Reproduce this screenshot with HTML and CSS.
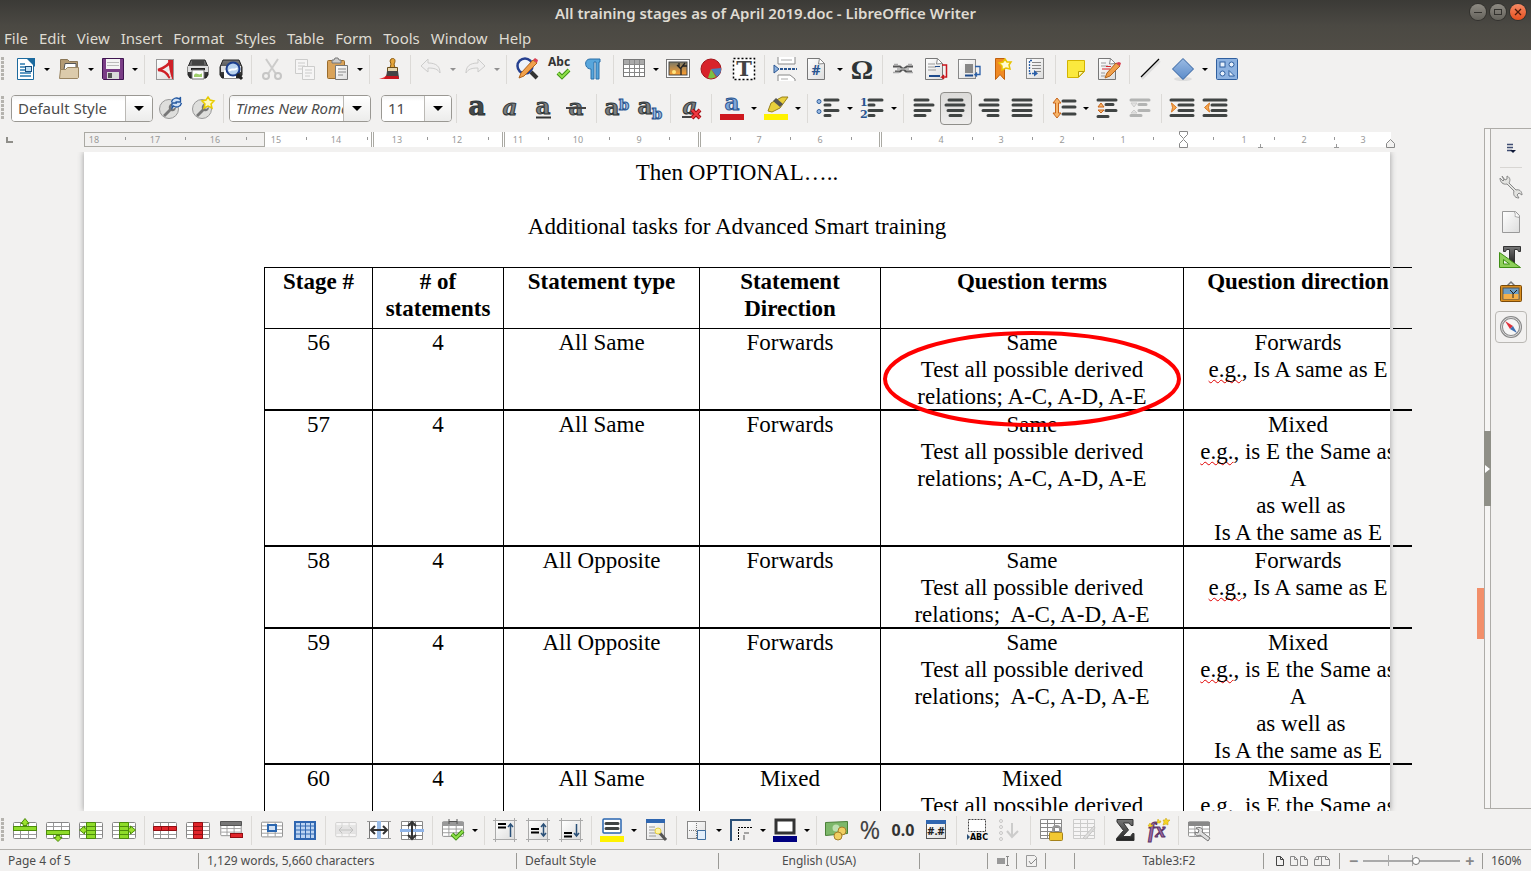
FILE: index.html
```html
<!DOCTYPE html>
<html lang="en">
<head>
<meta charset="utf-8">
<title>All training stages as of April 2019.doc - LibreOffice Writer</title>
<link rel="stylesheet" href="styles.css">
</head>
<body>
<svg class="defs" width="0" height="0" aria-hidden="true">
  <defs>
    <linearGradient id="dark" x1="0" y1="0" x2="0" y2="1"><stop offset="0" stop-color="#777"/><stop offset="1" stop-color="#222"/></linearGradient>
    <linearGradient id="paper" x1="0" y1="0" x2="1" y2="1"><stop offset="0" stop-color="#fff"/><stop offset="1" stop-color="#ddd"/></linearGradient>
    <linearGradient id="blue" x1="0" y1="0" x2="0" y2="1"><stop offset="0" stop-color="#9bbbe3"/><stop offset="1" stop-color="#5b8bc9"/></linearGradient>
    <linearGradient id="sky" x1="0" y1="0" x2="0" y2="1"><stop offset="0" stop-color="#7b7a68"/><stop offset="1" stop-color="#ff9f2e"/></linearGradient>
    <symbol id="grid" viewBox="0 0 24 18"><rect x=".5" y=".5" width="23" height="16" rx="1" fill="#fff" stroke="#888"/><path d="M1 4.500h22M1 8.500h22M1 12.500h22M7.500 1v15M15.500 1v15" stroke="#999" fill="none"/></symbol>
    <symbol id="sheet" viewBox="0 0 24 24"><path d="M3.500 1.500h12l5 5v16h-17z" fill="url(#paper)" stroke="#777"/><path d="M15.500 1.500l-1 5.500 6-.5z" fill="#fff" stroke="#888"/></symbol>
    <symbol id="cell" viewBox="0 0 24 24"><rect x="3" y="3" width="18" height="18" fill="url(#paper)"/><path d="M0 2.500h24M0 21.500h24M2.500 0v24M21.500 0v24" stroke="#aaa"/></symbol>
  </defs>
</svg>

<header class="titlebar">
  <h1 class="title">All training stages as of April 2019.doc - LibreOffice Writer</h1>
  <div class="winbtns">
    <button class="win" aria-label="Minimize"><svg width="16" height="16"><path d="M4 8.500h8" stroke="#33322e"/></svg></button>
    <button class="win" aria-label="Maximize"><svg width="16" height="16"><rect x="4.500" y="5.500" width="7" height="5" fill="none" stroke="#33322e"/></svg></button>
    <button class="win win-close" aria-label="Close"><svg width="16" height="16"><path d="M5 5l6 6M11 5l-6 6" stroke="#4a1a0a" stroke-width="1.300"/></svg></button>
  </div>
</header>
<nav class="menubar">
  <button>File</button><button>Edit</button><button>View</button><button>Insert</button><button>Format</button><button>Styles</button><button>Table</button><button>Form</button><button>Tools</button><button>Window</button><button>Help</button>
</nav>

<div class="toolbar standard" role="toolbar" aria-label="Standard">
  <i class="grip"></i>
  <button class="tb" aria-label="New"><svg viewBox="0 0 24 24"><path d="M4.500 1.500h10l6 6v15h-16z" fill="#fff" stroke="#1c6a9e"/><path d="M13 1h9v9z" fill="#1c6a9e"/><path d="M7 7h5M7 10h5M7 13h5M7 16h11M7 19h11" stroke="#2a7ab0" stroke-width="1.500"/><rect x="12.500" y="9.500" width="6" height="5" fill="#bfe0f5" stroke="#174f80"/></svg></button><button class="drop" aria-label="New options"></button>
  <button class="tb" aria-label="Open"><svg viewBox="0 0 24 24"><path d="M3.500 20.500V2.500h7l2 2h8v8" fill="#b49b74" stroke="#8a7656"/><path d="M8 6.500h11v6H7z" fill="#fff" stroke="#555"/><path d="M2.500 21.500l1-9h5l2-2h11v10l-1 1z" fill="#dccbab" stroke="#9a8561"/></svg></button><button class="drop" aria-label="Open options"></button>
  <button class="tb" aria-label="Save"><svg viewBox="0 0 24 24"><path d="M1.500 1.500h21v21h-20l-1-1z" fill="#7a3d86" stroke="#3f1550"/><rect x="5" y="2" width="14" height="10" fill="#f4f4f4"/><path d="M6 5.500h12M6 8.500h12" stroke="#bbb"/><rect x="6" y="15" width="12" height="7" fill="#d9d9d9"/><rect x="7" y="16" width="4" height="5" fill="#555"/></svg></button><button class="drop" aria-label="Save options"></button>
  <i class="sep"></i>
  <button class="tb" aria-label="Export as PDF"><svg viewBox="0 0 24 24"><rect x="3.500" y="2.500" width="17" height="20" fill="url(#paper)" stroke="#999"/><path d="M18 3c-1 4-7 8-13 10 5 0 9 3 12 8" stroke="#cf2027" stroke-width="2.500" fill="none"/><path d="M15 3h5v19h-1c-2-6-3-12-4-19z" fill="#cf2027"/><path d="M15 14c1 3 2 5 3 7" stroke="#fff"/></svg></button>
  <button class="tb" aria-label="Print"><svg viewBox="0 0 24 24"><path d="M5 3h14l3 7v8l-2 3H4l-2-3v-8z" fill="url(#dark)" stroke="#222"/><rect x="6" y="3" width="12" height="5" fill="#444"/><path d="M2 9h20v6H2z" fill="#ddd"/><path d="M5 12h14" stroke="#222" stroke-width="2"/><path d="M6 13h12v9H6z" fill="#fff" stroke="#777"/><path d="M8 18c3-4 5 2 8-2v4H8z" fill="#9fcf6b"/></svg></button>
  <button class="tb" aria-label="Print Preview"><svg viewBox="0 0 24 24"><path d="M4 3h16l3 7v8l-2 3H3l-2-3v-8z" fill="url(#dark)" stroke="#222"/><path d="M2 9h20v6H2z" fill="#ddd"/><rect x="5" y="13" width="12" height="8" fill="#fff"/><circle cx="14" cy="12" r="6.500" fill="#b9d3ee" stroke="#1d3f8c" stroke-width="2"/><path d="M10 14c3-4 5 1 8-3" stroke="#fff" stroke-width="2" fill="none"/><path d="M18 17l5 5" stroke="#222" stroke-width="3"/></svg></button>
  <i class="sep"></i>
  <button class="tb dim" aria-label="Cut" disabled><svg viewBox="0 0 24 24"><path d="M6 2l10 15M18 2L8 17" stroke="#888" stroke-width="2"/><circle cx="6" cy="19" r="3" fill="none" stroke="#777" stroke-width="2"/><circle cx="18" cy="19" r="3" fill="none" stroke="#777" stroke-width="2"/></svg></button>
  <button class="tb dim" aria-label="Copy" disabled><svg viewBox="0 0 24 24"><path d="M2.500 2.500h12v14h-12z" fill="#fff" stroke="#888"/><path d="M5 6h7M5 9h7M5 12h5" stroke="#888"/><path d="M9.500 9.500h12v13h-12z" fill="#fff" stroke="#888"/><path d="M12 13h7M12 16h7M12 19h5" stroke="#888"/></svg></button>
  <button class="tb" aria-label="Paste"><svg viewBox="0 0 24 24"><rect x="1.500" y="3.500" width="17" height="18" rx="1" fill="#d9a35a" stroke="#9a6c2c"/><path d="M6 5V3h2l1-2h3l1 2h2v3H6z" fill="#ccc" stroke="#777"/><path d="M9.500 8.500h12v14h-12z" fill="url(#paper)" stroke="#777"/><path d="M12 12h8M12 15h8M12 18h5" stroke="#888"/></svg></button><button class="drop" aria-label="Paste options"></button>
  <i class="sep"></i>
  <button class="tb" aria-label="Clone Formatting"><svg viewBox="0 0 24 24"><path d="M1 22c5-1 7-3 8-5l11 1 1 4z" fill="#e8353c"/><path d="M13 2c4-2 5 2 3 5l1 4h-5l1-4-1-3z" fill="#e5a53a" stroke="#8a5a10"/><path d="M9.500 10.500h10v4h-10z" fill="#e8d8b0" stroke="#6b4d18"/><path d="M9 14h11l1 7-4-1-3 1-3-1-3 1z" fill="#444"/><path d="M8 19l12 0 1 3H6z" fill="#c8161d"/></svg></button>
  <i class="sep"></i>
  <button class="tb dim" aria-label="Undo" disabled><svg viewBox="0 0 24 24"><path d="M2 9l7-7v4c9 0 12 4 12 10-2-4-6-5-12-5v4z" fill="#eee" stroke="#888"/></svg></button><button class="drop dim" aria-label="Undo list" disabled></button>
  <button class="tb dim" aria-label="Redo" disabled><svg viewBox="0 0 24 24"><path d="M22 9l-7-7v4C6 6 3 10 3 16c2-4 6-5 12-5v4z" fill="#eee" stroke="#888"/></svg></button><button class="drop dim" aria-label="Redo list" disabled></button>
  <i class="sep"></i>
  <button class="tb" aria-label="Find and Replace"><svg viewBox="0 0 24 24"><circle cx="10" cy="9" r="7.500" fill="#eef3fa" stroke="#26408f" stroke-width="2.500"/><path d="M16 15l6 6" stroke="#333" stroke-width="4"/><path d="M4 21l2-5L18 3l4 3L9 19z" fill="#f0a04b" stroke="#b0621a"/><path d="M18 3l4 3 1-3-3-2z" fill="#d94052"/></svg></button>
  <button class="tb" aria-label="Spelling"><svg viewBox="0 0 24 24"><text x="0" y="9" class="i-abc">Abc</text><path d="M10 16l4 4 7-7" stroke="#3f8f14" stroke-width="4" fill="none"/><path d="M10 16l4 4 7-7" stroke="#8ee04a" stroke-width="2" fill="none"/></svg></button>
  <button class="tb" aria-label="Formatting Marks"><svg viewBox="0 0 24 24"><path d="M19 2H9C3 2 3 12 10 12v10h3V5h2v17h3V5h1z" fill="#58a6dc" stroke="#2a6fa8"/></svg></button>
  <i class="sep"></i>
  <button class="tb" aria-label="Insert Table"><svg viewBox="0 0 24 24"><rect x="1.500" y="2.500" width="21" height="17" fill="#fff" stroke="#777"/><path d="M2 3h20v4H2z" fill="#aaa"/><path d="M2 7.500h20M2 11.500h20M2 15.500h20M7.500 3v16M12.500 3v16M17.500 3v16" stroke="#888"/></svg></button><button class="drop" aria-label="Table size"></button>
  <button class="tb" aria-label="Insert Image"><svg viewBox="0 0 24 24"><rect x=".5" y="2.500" width="23" height="18" fill="#fff" stroke="#777"/><rect x="3" y="5" width="18" height="13" fill="url(#sky)" stroke="#444"/><path d="M15 18v-7M15 12l-4-4M15 11l4-5M13 10V6M17 9l4 0" stroke="#222" stroke-width="1.300"/><circle cx="8" cy="15" r="2" fill="#ffe680"/></svg></button>
  <button class="tb" aria-label="Insert Chart"><svg viewBox="0 0 24 24"><circle cx="12" cy="12" r="10" fill="#d8232a" stroke="#a3151b"/><path d="M12 12l10-1a10 10 0 0 1-4 9z" fill="#4a7ebb"/><path d="M12 12l5 8a10 10 0 0 1-8 1z" fill="#7ac143"/></svg></button>
  <button class="tb" aria-label="Insert Text Box"><svg viewBox="0 0 24 24"><rect x="1.500" y="1.500" width="21" height="21" fill="#fff" stroke="#000" stroke-width="1.500" stroke-dasharray="2 2"/><text x="12" y="19" class="i-serif i-mid">T</text></svg></button>
  <i class="sep"></i>
  <button class="tb" aria-label="Page Break"><svg viewBox="0 0 24 24"><path d="M5 0v7h17V0M5 24v-6h12l5 4v2" fill="#fff" stroke="#888"/><path d="M8 3h11M8 22h7" stroke="#aaa"/><path d="M1 8l5 4-5 4z" fill="#8fb4e0" stroke="#2a5590"/><path d="M7 12h17" stroke="#2a5590" stroke-width="2" stroke-dasharray="3 1"/></svg></button>
  <button class="tb" aria-label="Insert Field"><svg viewBox="0 0 24 24"><use href="#sheet" x="-2"/><text x="10" y="18" class="i-hash i-mid">#</text></svg></button><button class="drop" aria-label="Field list"></button>
  <button class="tb" aria-label="Special Character"><svg viewBox="0 0 24 24"><text x="12" y="22" class="i-omega i-mid">Ω</text></svg></button>
  <i class="sep"></i>
  <button class="tb" aria-label="Insert Hyperlink"><svg viewBox="0 0 24 24"><path d="M2 9.500h7l3 2.500-3 2.500H4M22 9.500h-6l-4 2.500 3 2.500h6" fill="none" stroke="#555" stroke-width="2"/><path d="M6 12h12M2 15.500h6M16 15.500h6M3 7.500h4M17 7.500h4" stroke="#aaa" stroke-width="1.500"/></svg></button>
  <button class="tb" aria-label="Insert Footnote"><svg viewBox="0 0 24 24"><use href="#sheet" x="-2"/><path d="M4 7h7M4 10h8M4 13h8" stroke="#999"/><path d="M5 19h11" stroke="#1d4a8c" stroke-width="2"/><path d="M11 9.500h5" stroke="#1d4a8c"/><path d="M18 8h4.500v12H18l2-2M18 20l2 2" stroke="#c8161d" stroke-width="1.500" fill="none"/></svg></button>
  <button class="tb" aria-label="Insert Endnote"><svg viewBox="0 0 24 24"><rect x="1.500" y="2.500" width="17" height="19" fill="url(#paper)" stroke="#888"/><rect x="8" y="7" width="8" height="9" fill="#888"/><path d="M8 18.500h8" stroke="#1d4a8c" stroke-width="2"/><path d="M18 9.500h5v8h-5l2-2M18 17.500l2 2" stroke="#2a5fa8" fill="none" stroke-width="1.300"/></svg></button>
  <button class="tb" aria-label="Insert Bookmark"><svg viewBox="0 0 24 24"><path d="M5.500 1.500h9v21l-4.500-5-4.500 5z" fill="#f08a24" stroke="#c05f0c"/><path d="M15 2l2 3 4 0-2 3 1 4-4-1-4 2 0-4-3-3 4-1z" fill="#fffbd0" stroke="#e8c400" stroke-width="1.500"/></svg></button>
  <button class="tb" aria-label="Cross-reference"><svg viewBox="0 0 24 24"><rect x="3.500" y="1.500" width="17" height="20" fill="url(#paper)" stroke="#888"/><path d="M9 5.500h9M9 8.500h9M9 11.500h9M12 14.500h6" stroke="#888"/><path d="M9 3.500H6.500v13H12" stroke="#2a5fa8" stroke-width="1.300" fill="none" stroke-dasharray="2 1"/><path d="M11 13l4 3.500-4 3z" fill="#2a5fa8"/></svg></button>
  <i class="sep"></i>
  <button class="tb" aria-label="Insert Comment"><svg viewBox="0 0 24 24"><path d="M3.500 3.500h17v11l-6 6h-11z" fill="#fbe93e" stroke="#d3b400"/><path d="M20 14.500h-5.500V20z" fill="#fff9b0" stroke="#b89c00"/></svg></button>
  <button class="tb" aria-label="Track Changes"><svg viewBox="0 0 24 24"><use href="#sheet" x="-2"/><path d="M4 6h5M4 9h7M4 16h4M4 19h4" stroke="#999"/><path d="M5 12h8M9 9.500h5" stroke="#d8232a"/><path d="M8 21l2-5L19 6l4 3-10 10z" fill="#f0a04b" stroke="#b0621a"/><path d="M19 6l4 3 1-3-2-1z" fill="#d94052"/></svg></button>
  <i class="sep"></i>
  <button class="tb" aria-label="Line"><svg viewBox="0 0 24 24"><path d="M4 22L22 4" stroke="#ddd" stroke-width="2"/><path d="M3 20L21 2" stroke="#000" stroke-width="1.300"/></svg></button>
  <button class="tb" aria-label="Basic Shapes"><svg viewBox="0 0 24 24"><ellipse cx="12" cy="22" rx="9" ry="2" fill="#ddd"/><path d="M12 1.500L22.500 12 12 22.500 1.500 12z" fill="url(#blue)" stroke="#2f5f9f"/></svg></button><button class="drop" aria-label="Shape list"></button>
  <button class="tb" aria-label="Show Draw Functions"><svg viewBox="0 0 24 24"><rect x="1.500" y="1.500" width="21" height="21" rx="1" fill="#8db2e0" stroke="#2f5f9f"/><g fill="#e8f1fb" stroke="#2f5f9f"><rect x="5" y="5" width="5" height="5"/><circle cx="16.500" cy="7.500" r="2.500"/><circle cx="7.500" cy="16.500" r="2.500"/><path d="M14 13.500l5.500 5.500H14z"/></g></svg></button>
</div>

<div class="toolbar formatting" role="toolbar" aria-label="Formatting">
  <i class="grip"></i>
  <div class="combo combo-style"><input type="text" aria-label="Paragraph style" value="Default Style"><button aria-label="Style list"></button></div>
  <button class="tb" aria-label="Update Style"><svg viewBox="0 0 24 24"><circle cx="11" cy="13" r="9.500" fill="#dededc" stroke="#999"/><path d="M5 19l6-6c-1-4 2-6 4-5l-2 3 2 2 3-2c0 4-3 5-5 4l-6 6z" fill="#777"/><path d="M13.500 6c1-4 5-5 8-3l1-2v5h-5M23.500 7c-1 4-5 5-8 3l-1.500 2v-5h5" fill="#cfe0f5" stroke="#2458a0" stroke-width="1.300"/></svg></button>
  <button class="tb" aria-label="New Style"><svg viewBox="0 0 24 24"><circle cx="11" cy="13" r="9.500" fill="#dededc" stroke="#999"/><path d="M5 19l6-6c-1-4 2-6 4-5l-2 3 2 2 3-2c0 4-3 5-5 4l-6 6z" fill="#777"/><path d="M17 1l2 3 4 1-3 3 1 4-4-2-4 2 1-4-3-3 4-1z" fill="#fff9c0" stroke="#e8cc00" stroke-width="1.500"/></svg></button>
  <i class="sep"></i>
  <div class="combo combo-font"><input type="text" aria-label="Font name" value="Times New Roman"><button aria-label="Font list"></button></div>
  <div class="combo combo-size"><input type="text" aria-label="Font size" value="11"><button aria-label="Size list"></button></div>
  <i class="sep"></i>
  <button class="tb" aria-label="Bold"><svg viewBox="0 0 24 24"><text x="12" y="19" class="i-a i-bold">a</text></svg></button>
  <button class="tb" aria-label="Italic"><svg viewBox="0 0 24 24"><text x="12" y="19" class="i-a i-it">a</text></svg></button>
  <button class="tb" aria-label="Underline"><svg viewBox="0 0 24 24"><text x="12" y="18" class="i-a">a</text><path d="M5 21.500h15" stroke="#333" stroke-width="2"/></svg></button>
  <button class="tb" aria-label="Strikethrough"><svg viewBox="0 0 24 24"><text x="12" y="19" class="i-a">a</text><path d="M2 12h20" stroke="#444" stroke-width="2"/></svg></button>
  <i class="sep"></i>
  <button class="tb" aria-label="Superscript"><svg viewBox="0 0 24 24"><text x="7" y="19" class="i-a">a</text><text x="19" y="14" class="i-b">b</text></svg></button>
  <button class="tb" aria-label="Subscript"><svg viewBox="0 0 24 24"><text x="7" y="18" class="i-a">a</text><text x="19" y="23" class="i-b">b</text></svg></button>
  <i class="sep"></i>
  <button class="tb" aria-label="Clear Formatting"><svg viewBox="0 0 24 24"><text x="11" y="18" class="i-a i-it">a</text><path d="M3 21h10" stroke="#444" stroke-width="2"/><path d="M13 14l8 8M21 14l-8 8" stroke="#9c0d12" stroke-width="4"/><path d="M13 14l8 8M21 14l-8 8" stroke="#f03a40" stroke-width="2"/></svg></button>
  <i class="sep"></i>
  <button class="tb" aria-label="Font Color"><svg viewBox="0 0 24 24"><text x="12" y="14" class="i-a i-blue">a</text><rect x="0" y="18" width="24" height="6" fill="#ce181e"/></svg></button><button class="drop" aria-label="Font color list"></button>
  <button class="tb" aria-label="Highlighting"><svg viewBox="0 0 24 24"><path d="M4 15l3-8L18 1h6l-8 11-8 4z" fill="#e8cf3c" stroke="#9a8218"/><path d="M9 5l7 6 3-3-7-6z" fill="#555"/><rect x="0" y="18" width="24" height="6" fill="#fff200"/></svg></button><button class="drop" aria-label="Highlight list"></button>
  <i class="sep"></i>
  <button class="tb" aria-label="Bullets"><svg viewBox="0 0 24 24"><circle cx="3" cy="5.500" r="2" fill="#9bbbe3" stroke="#2f5f9f"/><circle cx="3" cy="15.500" r="2" fill="#9bbbe3" stroke="#2f5f9f"/><path d="M9 4h13M9 9h5M9 14.500h13M9 19.500h5" class="i-bar"/></svg></button><button class="drop" aria-label="Bullet list"></button>
  <button class="tb" aria-label="Numbering"><svg viewBox="0 0 24 24"><text x="0" y="10" class="i-num">1</text><text x="0" y="22" class="i-num">2</text><path d="M9 4h13M9 9h5M9 14.500h13M9 19.500h5" class="i-bar"/></svg></button><button class="drop" aria-label="Number list"></button>
  <i class="sep"></i>
  <button class="tb" aria-label="Align Left"><svg viewBox="0 0 24 24"><path d="M3 4h13M3 9h18M3 14.500h15M3 19.500h10" class="i-bar"/></svg></button>
  <button class="tb active" aria-label="Center" aria-pressed="true"><svg viewBox="0 0 24 24"><path d="M5 4h13M2 9h18M4 14.500h15M6 19.500h11" class="i-bar"/></svg></button>
  <button class="tb" aria-label="Align Right"><svg viewBox="0 0 24 24"><path d="M7 4h13M2 9h18M5 14.500h15M10 19.500h10" class="i-bar"/></svg></button>
  <button class="tb" aria-label="Justify"><svg viewBox="0 0 24 24"><path d="M2 4h18M2 9h18M2 14.500h18M2 19.500h18" class="i-bar"/></svg></button>
  <i class="sep"></i>
  <button class="tb" aria-label="Line Spacing"><svg viewBox="0 0 24 24"><path d="M5 2l4 5H6.500v10H9l-4 5-4-5h2.500V7H1z" fill="#f7b468" stroke="#c8651b"/><path d="M11 5h12M11 11h12M11 18h12" class="i-bar"/></svg></button><button class="drop" aria-label="Spacing list"></button>
  <button class="tb" aria-label="Increase Paragraph Spacing"><svg viewBox="0 0 24 24"><path d="M2 4h18M10 8.500h7M10 14.500h10M2 20.500h10" class="i-bar"/><path d="M2 11l3-4 3 4zM2 14l3 3 3-3z" fill="#f7b468" stroke="#c8651b"/></svg></button>
  <button class="tb dim" aria-label="Decrease Paragraph Spacing" disabled><svg viewBox="0 0 24 24"><path d="M2 4h18M10 8.500h7M10 14.500h10M2 19.500h10" class="i-bar"/><path d="M2 7l3 4 3-4zM2 17l3-3 3 3z" fill="#ccc" stroke="#888"/></svg></button>
  <i class="sep"></i>
  <button class="tb" aria-label="Increase Indent"><svg viewBox="0 0 24 24"><path d="M1 4h22M9 9h14M9 14.500h14M1 19.500h22" class="i-bar"/><path d="M1.500 7l5 4.500-5 4.500 1-4.500z" fill="#f7a850" stroke="#d97820"/></svg></button>
  <button class="tb" aria-label="Decrease Indent"><svg viewBox="0 0 24 24"><path d="M1 4h22M9 9h14M9 14.500h14M1 19.500h22" class="i-bar"/><path d="M6.500 7l-5 4.500 5 4.500-1-4.500z" fill="#f7a850" stroke="#d97820"/></svg></button>
</div>

<main class="main">
  <section class="editor">
    <div class="rulerbar">
      <span class="tabkind"></span>
      <svg class="ruler" height="20" aria-label="Ruler">
        <rect x="0" y="4" width="1307" height="15" fill="#fff"/>
        <rect x=".5" y="4.500" width="180" height="14" fill="#f2f1f0" stroke="#aaa9a3"/>
        <path d="M41.500 9v3M101.500 9v3M162.500 9v3M222.500 9v3M283.500 9v3M343.500 9v3M404.500 9v3M464.500 9v3M525.500 9v3M585.500 9v3M646.500 9v3M706.500 9v3M767.500 9v3M827.500 9v3M888.500 9v3M948.500 9v3M1009.500 9v3M1069.500 9v3M1129.500 9v3M1190.500 9v3M1250.500 9v3" stroke="#999"/>
        <g class="rnum">
          <text x="10" y="15">18</text><text x="71" y="15">17</text><text x="131" y="15">16</text><text x="192" y="15">15</text><text x="252" y="15">14</text><text x="313" y="15">13</text><text x="373" y="15">12</text><text x="434" y="15">11</text><text x="494" y="15">10</text><text x="555" y="15">9</text><text x="675" y="15">7</text><text x="736" y="15">6</text><text x="857" y="15">4</text><text x="917" y="15">3</text><text x="978" y="15">2</text><text x="1039" y="15">1</text><text x="1160" y="15">1</text><text x="1220" y="15">2</text><text x="1279" y="15">3</text>
        </g>
        <path d="M287.500 4v15M289.500 4v15M418.500 4v15M420.500 4v15M614.500 4v15M616.500 4v15M795.500 4v15M797.500 4v15" stroke="#aaa9a3"/>
        <path d="M1174 19.500h5M1176.500 16v3M1250 19.500h5M1252.500 16v3" stroke="#999"/>
        <path d="M1095.500 3.500h8v3l-4 4-4-4zM1095.500 19.500h8v-4l-4-4-4 4z" fill="#fff" stroke="#888"/>
        <path d="M1302.500 19.500v-4l4-4 4 4v4z" fill="#f2f1f0" stroke="#888"/>
      </svg>
    </div>
    <div class="workspace">
      <article class="page">
        <p>Then OPTIONAL…..</p>
        <p>&nbsp;</p>
        <p>Additional tasks for Advanced Smart training</p>
        <p>&nbsp;</p>
        <table class="stages">
          <colgroup><col class="c1"><col class="c2"><col class="c3"><col class="c4"><col class="c5"><col class="c6"></colgroup>
          <thead>
            <tr><th>Stage #</th><th># of<br>statements</th><th>Statement type</th><th>Statement<br>Direction</th><th>Question terms</th><th>Question direction</th></tr>
          </thead>
          <tbody>
            <tr class="first"><td>56</td><td>4</td><td>All Same</td><td>Forwards</td><td class="marked">Same<br>Test all possible derived<br>relations; A-C, A-D, A-E<svg class="ring" width="300" height="98" aria-hidden="true"><ellipse cx="150" cy="49" rx="147" ry="46" fill="none" stroke="#f00" stroke-width="4"/></svg></td><td>Forwards<br><span class="typo">e.g.</span>, Is A same as E</td></tr>
            <tr><td>57</td><td>4</td><td>All Same</td><td>Forwards</td><td>Same<br>Test all possible derived<br>relations; A-C, A-D, A-E</td><td>Mixed<br><span class="typo">e.g.</span>, is E the Same as<br>A<br>&nbsp;as well as<br>Is A the same as E</td></tr>
            <tr><td>58</td><td>4</td><td>All Opposite</td><td>Forwards</td><td>Same<br>Test all possible derived<br>relations;&nbsp; A-C, A-D, A-E</td><td>Forwards<br><span class="typo">e.g.</span>, Is A same as E</td></tr>
            <tr><td>59</td><td>4</td><td>All Opposite</td><td>Forwards</td><td>Same<br>Test all possible derived<br>relations;&nbsp; A-C, A-D, A-E</td><td>Mixed<br><span class="typo">e.g.</span>, is E the Same as<br>A<br>&nbsp;as well as<br>Is A the same as E</td></tr>
            <tr><td>60</td><td>4</td><td>All Same</td><td>Mixed</td><td>Mixed<br>Test all possible derived</td><td>Mixed<br><span class="typo">e.g.</span>, is E the Same as</td></tr>
          </tbody>
        </table>
      </article>
      <div class="gutter" aria-hidden="true">
        <div class="stubs"><i class="thin h61"></i><i class="thin h82"></i><i class="h136"></i><i class="h82"></i><i class="h136"></i><i></i></div>
        <div class="scroll"></div>
      </div>
    </div>
  </section>
  <div class="splitter"><button class="handle" aria-label="Hide sidebar"></button></div>
  <aside class="sidebar" aria-label="Sidebar">
    <button class="side menu" aria-label="Sidebar Settings"><svg viewBox="0 0 24 24"><path d="M8 8.500h6M8 11.500h6M8 14.500h5" stroke="#3f4d72" stroke-width="1.500"/><path d="M11 14h6l-3 3z" fill="#101a38"/></svg></button>
    <i class="rule"></i>
    <button class="side" aria-label="Properties"><svg viewBox="0 0 24 24"><path d="M3 1l3 4 2-1 0-3c4 2 3 5 2 7l7 7c3-1 6 1 6 5l-3-2-2 2 2 3c-5 0-6-4-5-7L8 9C4 10 1 7 1 3l3 3 1-1z" fill="#e3e3e0" stroke="#888"/></svg></button>
    <button class="side" aria-label="Page"><svg viewBox="0 0 24 24"><path d="M3.500 1.500h13l4 4v17h-17z" fill="url(#paper)" stroke="#999"/><path d="M15 1.500c2 2 1 4 1 5l4 1" fill="#fff" stroke="#aaa"/></svg></button>
    <button class="side" aria-label="Styles"><svg viewBox="0 0 24 24"><path d="M4.500 1.500h17v5h-2l-1-2h-3v14h-5v-14h-3l-1 2h-2z" fill="url(#dark)" stroke="#333"/><path d="M.5 7.500l21 15H.5z" fill="#8ed05a" stroke="#3f8f14"/><path d="M4.500 14.500l6 4.500h-6z" fill="#f2f1f0" stroke="#3f8f14"/></svg></button>
    <button class="side" aria-label="Gallery"><svg viewBox="0 0 24 24"><path d="M8 6l4-4 4 4" fill="none" stroke="#777" stroke-width="1.500"/><rect x="1.500" y="5.500" width="21" height="16" rx="1" fill="#d98e1f" stroke="#7a4a08"/><rect x="4" y="8" width="16" height="11" fill="#6f9fc4" stroke="#555"/><rect x="4.500" y="14" width="15" height="5" fill="#f5b04a"/><path d="M14 18v-5l-3-3M14 14l4-4" stroke="#222" fill="none"/></svg></button>
    <button class="side active" aria-label="Navigator"><svg viewBox="0 0 24 24"><circle cx="12" cy="12" r="9.500" fill="#f6f6f6" stroke="#888" stroke-width="3"/><circle cx="12" cy="12" r="9.500" fill="none" stroke="#ddd"/><path d="M6 6l8 5-3 3z" fill="#e0303a"/><path d="M18 18l-7-4 3-3z" fill="#3f6fb0"/></svg></button>
  </aside>
</main>

<div class="toolbar tabletools" role="toolbar" aria-label="Table">
  <i class="grip"></i>
  <button class="tb" aria-label="Insert Row Above"><svg viewBox="0 0 24 24"><use href="#grid" y="4" width="24" height="18"/><rect x=".5" y="8.500" width="23" height="4" fill="#8fdc2a" stroke="#4c8c0a"/><path d="M12 .5l4 5-2 0v2h-4v-2H8z" fill="#9be22d" stroke="#4c8c0a"/></svg></button>
  <button class="tb" aria-label="Insert Row Below"><svg viewBox="0 0 24 24"><use href="#grid" y="4" width="24" height="18"/><rect x=".5" y="12.500" width="23" height="4" fill="#8fdc2a" stroke="#4c8c0a"/><path d="M12 23.500l4-4h-2v-2h-4v2H8z" fill="#9be22d" stroke="#4c8c0a"/></svg></button>
  <button class="tb" aria-label="Insert Column Before"><svg viewBox="0 0 24 24"><use href="#grid" y="4" width="24" height="18"/><path d="M7.500 4.500h9v16h-9zM7.500 8.500h9M7.500 12.500h9M7.500 16.500h9" fill="#8fdc2a" stroke="#4c8c0a"/><path d="M.5 12l5-4v2h2v4h-2v2z" fill="#9be22d" stroke="#4c8c0a"/></svg></button>
  <button class="tb" aria-label="Insert Column After"><svg viewBox="0 0 24 24"><use href="#grid" y="4" width="24" height="18"/><path d="M7.500 4.500h9v16h-9zM7.500 8.500h9M7.500 12.500h9M7.500 16.500h9" fill="#8fdc2a" stroke="#4c8c0a"/><path d="M23.500 12l-5-4v2h-2v4h2v2z" fill="#9be22d" stroke="#4c8c0a"/></svg></button>
  <i class="sep"></i>
  <button class="tb" aria-label="Delete Rows"><svg viewBox="0 0 24 24"><use href="#grid" y="4" width="24" height="18"/><path d="M.5 8.500h23v4H.5zM8.500 8.500v4M15.500 8.500v4" fill="#e0242a" stroke="#930d12"/></svg></button>
  <button class="tb" aria-label="Delete Columns"><svg viewBox="0 0 24 24"><use href="#grid" y="4" width="24" height="18"/><path d="M7.500 4.500h9v16h-9zM7.500 8.500h9M7.500 12.500h9M7.500 16.500h9" fill="#e0242a" stroke="#930d12"/></svg></button>
  <button class="tb" aria-label="Delete Table"><svg viewBox="0 0 24 24"><use href="#grid" x="1" y="3" width="22" height="16"/><path d="M1.500 3.500h21v4h-21z" fill="#777" stroke="#555"/><rect x="11.500" y="15.500" width="12" height="4" fill="#e0242a" stroke="#930d12"/></svg></button>
  <i class="sep"></i>
  <button class="tb" aria-label="Select Cell"><svg viewBox="0 0 24 24"><use href="#grid" x="1" y="3" width="22" height="18"/><rect x="8" y="7" width="8" height="6" fill="#cfe0f5" stroke="#2a66b0" stroke-width="2"/></svg></button>
  <button class="tb" aria-label="Select Table"><svg viewBox="0 0 24 24"><rect x="2" y="4" width="20" height="17" fill="#bcd4f2" stroke="#2f66b0" stroke-width="2"/><path d="M2 8h20M2 12h20M2 16h20M7.500 4v16M12.500 4v16M17.500 4v16" stroke="#2f66b0"/></svg></button>
  <i class="sep"></i>
  <button class="tb dim" aria-label="Merge Cells" disabled><svg viewBox="0 0 24 24"><use href="#grid" x="1" y="4" width="22" height="16"/><rect x="2" y="9" width="20" height="6" fill="#ccc"/><path d="M5 12h14M8 9l-3 3 3 3M16 9l3 3-3 3" stroke="#666" fill="none"/></svg></button>
  <button class="tb" aria-label="Split Cells"><svg viewBox="0 0 24 24"><rect x="2.500" y="3.500" width="19" height="17" fill="#fff" stroke="#777"/><path d="M0 3.500h24M0 20.500h24" stroke="#999"/><rect x="10" y="3" width="4" height="18" fill="#9bbde8"/><path d="M4 12h16M8 8l-4 4 4 4M16 8l4 4-4 4" stroke="#333" stroke-width="2" fill="none"/></svg></button>
  <button class="tb" aria-label="Split Table"><svg viewBox="0 0 24 24"><path d="M1.500 3.500h21v18h-21zM1 7.500h22M1 17.500h22M8.500 4v17M15.500 4v17" fill="#fff" stroke="#888"/><rect x="0" y="11" width="24" height="3" fill="#8fb4e8"/><path d="M12 4v17M8 8l4-4 4 4M8 17l4 4 4-4" stroke="#333" stroke-width="2" fill="none"/></svg></button>
  <i class="sep"></i>
  <button class="tb" aria-label="Optimize Size"><svg viewBox="0 0 24 24"><use href="#grid" x="1" y="3" width="22" height="17"/><path d="M1 4h22v4H1z" fill="#999"/><path d="M8 3.500h8M8 1v5M16 1v5" stroke="#555"/><path d="M11 16l4 4 7-7" stroke="#3f8f14" stroke-width="4" fill="none"/><path d="M11 16l4 4 7-7" stroke="#8ee04a" stroke-width="2" fill="none"/></svg></button><button class="drop" aria-label="Size options"></button>
  <i class="sep"></i>
  <button class="tb" aria-label="Align Top"><svg viewBox="0 0 24 24"><use href="#cell"/><path d="M5 6h8M5 9.500h8" stroke="#000" stroke-width="2"/><path d="M17.500 19V6M15 9l2.500-3L20 9" stroke="#2a5078" stroke-width="1.500" fill="none"/></svg></button>
  <button class="tb" aria-label="Center Vertically"><svg viewBox="0 0 24 24"><use href="#cell"/><path d="M5 11h8M5 14.500h8" stroke="#000" stroke-width="2"/><path d="M17.500 17V7M15 9l2.500-3L20 9M15 15l2.500 3L20 15" stroke="#2a5078" stroke-width="1.500" fill="none"/></svg></button>
  <button class="tb" aria-label="Align Bottom"><svg viewBox="0 0 24 24"><use href="#cell"/><path d="M5 15h8M5 18.500h8" stroke="#000" stroke-width="2"/><path d="M17.500 6v12M15 15l2.500 3L20 15" stroke="#2a5078" stroke-width="1.500" fill="none"/></svg></button>
  <i class="sep"></i>
  <button class="tb" aria-label="Cell Background"><svg viewBox="0 0 24 24"><rect x="3" y="1" width="18" height="14" rx="1" fill="#fff" stroke="#2a66b0" stroke-width="1.500"/><path d="M6 5.500h12M6 10.500h12" class="i-bar"/><rect x="0" y="18" width="24" height="6" fill="#fff200"/></svg></button><button class="drop" aria-label="Background list"></button>
  <button class="tb" aria-label="AutoFormat"><svg viewBox="0 0 24 24"><rect x="2.500" y="1.500" width="18" height="20" fill="url(#paper)" stroke="#888"/><rect x="2" y="1" width="19" height="4" fill="#2f66b0"/><path d="M5 9h6M5 12h6M5 15h8M5 18h7" stroke="#999"/><path d="M14 13l8 9" stroke="#555" stroke-width="3"/><circle cx="14" cy="13" r="3" fill="#fff3a0" stroke="#e5cf40"/></svg></button>
  <i class="sep"></i>
  <button class="tb" aria-label="Borders"><svg viewBox="0 0 24 24"><rect x="2.500" y="3.500" width="18" height="17" fill="url(#paper)" stroke="#888"/><path d="M11.500 5v15M4 12.500h16" stroke="#777" stroke-dasharray="1 1"/><path d="M12.500 12.500h8v9h-8z" fill="#e3effb" stroke="#3f6f9f"/></svg></button><button class="drop" aria-label="Border list"></button>
  <button class="tb" aria-label="Border Style"><svg viewBox="0 0 24 24"><path d="M2 23V2h20" stroke="#2a5078" stroke-width="2" fill="none"/><path d="M9.500 22V9.500H24" stroke="#000" stroke-dasharray="2 1" fill="none"/><path d="M15 22v-7h7" stroke="#555" fill="none" stroke-dasharray="5 2"/></svg></button><button class="drop" aria-label="Border style list"></button>
  <button class="tb" aria-label="Border Color"><svg viewBox="0 0 24 24"><rect x="3" y="2" width="18" height="13" fill="#fff" stroke="#333" stroke-width="3"/><rect x="0" y="18" width="24" height="6" fill="#000080"/></svg></button><button class="drop" aria-label="Border color list"></button>
  <i class="sep"></i>
  <button class="tb" aria-label="Currency Format"><svg viewBox="0 0 24 24"><path d="M.5 4.500l22-1v12l-22 2z" fill="#7db86a" stroke="#4a8038"/><circle cx="11" cy="10" r="3.500" fill="#bfe0b0"/><circle cx="17" cy="13" r="4" fill="#f0cf62" stroke="#a5802a"/><circle cx="13" cy="18" r="4" fill="#f0cf62" stroke="#a5802a"/></svg></button>
  <button class="tb" aria-label="Percent Format"><svg viewBox="0 0 24 24"><text x="12" y="21" class="i-pct i-mid">%</text></svg></button>
  <button class="tb" aria-label="Decimal Format"><svg viewBox="0 0 24 24"><text x="12" y="18" class="i-dec i-mid">0.0</text></svg></button>
  <button class="tb" aria-label="Number Format"><svg viewBox="0 0 24 24"><rect x="2.500" y="2.500" width="19" height="18" fill="url(#paper)" stroke="#555"/><rect x="2" y="2" width="20" height="4" fill="#2f66b0"/><text x="12" y="17" class="i-sm i-mid">#.#</text></svg></button>
  <i class="sep"></i>
  <button class="tb" aria-label="Insert Caption"><svg viewBox="0 0 24 24"><rect x="3.500" y="1.500" width="17" height="12" fill="#fff" stroke="#444" stroke-dasharray="2 1"/><path d="M2 16l3 3-3 3z" fill="#2a5078"/><text x="14" y="22" class="i-xs i-mid">ABC</text></svg></button>
  <button class="tb dim" aria-label="Sort" disabled><svg viewBox="0 0 24 24"><circle cx="3" cy="3" r="1.500" fill="none" stroke="#777"/><circle cx="3" cy="9" r="1.500" fill="none" stroke="#777"/><circle cx="3" cy="15" r="1.500" fill="none" stroke="#777"/><circle cx="3" cy="21" r="1.500" fill="none" stroke="#777"/><path d="M14 5v14M9 13l5 6 6-6" fill="none" stroke="#888" stroke-width="2"/></svg></button>
  <i class="sep"></i>
  <button class="tb" aria-label="Protect Cells"><svg viewBox="0 0 24 24"><path d="M1.500 1.500h21v19h-21zM1 5.500h22M1 9.500h22M1 13.500h22M1 17.500h22M8.500 1v19M15.500 1v19" fill="#fff" stroke="#888"/><path d="M14 15v-4c0-4 7-4 7 0v4" fill="none" stroke="#999" stroke-width="2"/><rect x="10.500" y="14.500" width="13" height="8" rx="1" fill="#f2c832" stroke="#a5821a"/></svg></button>
  <button class="tb dim" aria-label="Unprotect Cells" disabled><svg viewBox="0 0 24 24"><path d="M1.500 1.500h21v19h-21zM1 5.500h22M1 9.500h22M1 13.500h22M1 17.500h22M8.500 1v19M15.500 1v19" fill="#fff" stroke="#888"/><path d="M11 20l11-12 1 2-9 11z" fill="#bbb" stroke="#777"/></svg></button>
  <i class="sep"></i>
  <button class="tb" aria-label="Sum"><svg viewBox="0 0 24 24"><path d="M4 1.500h16v6h-2l-2-2.500h-5.500l5 7-6 6.500h8l2-3h1.500v7H3.500v-2l7-8-6.500-8.500z" fill="url(#dark)" stroke="#333"/></svg></button>
  <button class="tb" aria-label="Formula"><svg viewBox="0 0 24 24"><text x="11" y="19" class="i-fx i-mid">fx</text><path d="M4 5l1 2 2 0-2 2-3-1zM12 1l1 2 2 0-1 2-3 0zM20 0l1 2 3 0-2 2 0 3-2-1-3 1 1-3-1-2 2 0z" fill="#f4d428" stroke="#c8a200" stroke-width=".5"/></svg></button>
  <i class="sep"></i>
  <button class="tb" aria-label="Table Properties"><svg viewBox="0 0 24 24"><use href="#grid" x="1" y="3" width="22" height="17"/><path d="M1 4h22v4H1z" fill="#888"/><path d="M9 10c4-2 8 1 6 4l8 6-2 3-8-6c-3 2-5 0-5-3l3 1 1-3z" fill="#ddd" stroke="#777"/></svg></button>
</div>

<footer class="statusbar">
  <span class="s-page">Page 4 of 5</span>
  <span class="s-words">1,129 words, 5,660 characters</span>
  <span class="s-style">Default Style</span>
  <span class="s-lang">English (USA)</span>
  <span class="s-blank"></span>
  <span class="s-ico"><svg width="14" height="12"><rect x="1" y="3" width="8" height="6" fill="#999"/><path d="M10 1.500h3M10 10.500h3M11.500 2v8" stroke="#888"/></svg></span>
  <span class="s-ico"><svg width="12" height="12"><path d="M1.500.5h8l2 2v9h-10z" fill="none" stroke="#999"/><path d="M4 6l2 3 5-5" stroke="#888" fill="none"/></svg></span>
  <span class="s-ico"></span>
  <span class="s-cell">Table3:F2</span>
  <span class="s-views">
    <button aria-label="Single-page view"><svg width="10" height="12"><path d="M1.500 1.500h4l3 3v6h-7zM5.500 1.500v3h3" fill="none" stroke="#444"/></svg></button>
    <button aria-label="Multiple-page view"><svg width="20" height="12"><path d="M1.500 1.500h4l3 3v6h-7zM5.500 1.500v3h3M11.500 1.500h4l3 3v6h-7zM15.500 1.500v3h3" fill="none" stroke="#888"/></svg></button>
    <button aria-label="Book view"><svg width="18" height="12"><path d="M8.500 10.500V1.500h-5l-2 3v6zM8.500 1.500h5l3 3v6h-8M5.500 1.500v3h-4M12.500 1.500v3h4" fill="none" stroke="#888"/></svg></button>
  </span>
  <span class="s-zoom"><button aria-label="Zoom out">−</button><input type="range" min="0" max="100" value="55" aria-label="Zoom"><button aria-label="Zoom in">+</button></span>
  <span class="s-pct">160%</span>
</footer>
</body>
</html>
```

FILE: styles.css
```css
* { box-sizing: border-box; }
body {
  margin: 0;
  height: 100vh;
  display: flex;
  flex-direction: column;
  overflow: hidden;
  background: #f2f1f0;
  color: #4c4c4c;
  font-family: "Noto Sans", "Open Sans", sans-serif;
  font-size: 15px;
}
button, input { font: inherit; color: inherit; border: 0; padding: 0; margin: 0; background: none; }
.defs { position: absolute; }

/* title and menus */
.titlebar {
  flex: none;
  position: relative;
  height: 26px;
  display: flex;
  align-items: center;
  justify-content: center;
  background: linear-gradient(#3b3a36, #4b4943);
}
.title { margin: 0; color: #dfdbd2; font-size: 15px; line-height: 24px; font-weight: 600; }
.winbtns { position: absolute; right: 5px; top: 4px; display: flex; gap: 4px; }
.win { width: 16px; height: 16px; border-radius: 8px; background: linear-gradient(#8e8b83, #65635c); box-shadow: 0 0 0 1px #33322e; }
.win svg { display: block; }
.win-close { background: linear-gradient(#f68a65, #e6501f); }
.menubar {
  flex: none;
  height: 24px;
  display: flex;
  gap: 11px;
  padding-left: 4px;
  background: linear-gradient(#4b4943, #504d46);
  color: #dfdbd2;
}
.menubar button { line-height: 24px; }

/* toolbars */
.toolbar { flex: none; display: flex; align-items: center; height: 38px; }
.formatting { height: 40px; }
.grip {
  flex: none;
  width: 3px;
  height: 24px;
  margin: 0 4px 0 1px;
  background: repeating-linear-gradient(#b5b3ae 0 3px, transparent 3px 4px);
}
.tb { flex: none; width: 33px; height: 33px; display: flex; align-items: center; justify-content: center; }
.tb svg { width: 24px; height: 24px; overflow: visible; }
.tb.active {
  width: 32px;
  margin-right: 1px;
  border: 1px solid #8f8e8a;
  border-radius: 4px;
  background: linear-gradient(#dcdbd9, #eeedec);
}
.tb.dim { opacity: .35; }
.drop { flex: none; width: 11px; height: 33px; }
.drop::after {
  content: "";
  display: block;
  width: 0;
  margin: auto;
  border: 3px solid transparent;
  border-top-color: #000;
  border-bottom: 0;
}
.drop.dim { opacity: .4; }
.sep { flex: none; width: 8px; height: 29px; background: linear-gradient(#dcdad7, #dcdad7) center / 1px 100% no-repeat; }

.combo {
  flex: none;
  display: flex;
  height: 27px;
  border: 1px solid #9a9893;
  border-radius: 4px;
  background: #fff;
  overflow: hidden;
}
.combo input { flex: 1; min-width: 0; padding-left: 6px; background: linear-gradient(#f2f2f2, #fff 5px); }
.combo button { width: 27px; border-left: 1px solid #bbb9b5; background: linear-gradient(#fff, #ececeb); }
.combo button::after {
  content: "";
  display: block;
  width: 0;
  margin: auto;
  border: 5px solid transparent;
  border-top-color: #000;
  border-bottom: 0;
}
.combo-style { width: 142px; margin-left: 3px; }
.combo-font { width: 142px; margin: 0 10px 0 2px; }
.combo-font input { font-style: italic; }
.combo-size { width: 71px; }

/* lettering inside icons */
.i-mid { text-anchor: middle; }
.i-abc { font: bold 12px "Noto Sans", sans-serif; fill: #333; }
.i-serif { font: bold 21px "DejaVu Serif", serif; fill: #444; }
.i-hash { font: bold 14px "Noto Sans", sans-serif; fill: #2a5590; }
.i-omega { font: bold 28px "Liberation Serif", serif; fill: #2e3436; }
.i-a { font: bold 23px "DejaVu Serif", serif; fill: #7b7f80; stroke: #2e3436; stroke-width: 1px; text-anchor: middle; }
.i-bold { font-size: 26px; fill: #45494a; }
.i-it { font-style: italic; }
.i-blue { fill: #7ea6d8; stroke: #2a5590; }
.i-b { font: bold 15px "DejaVu Serif", serif; fill: #9bbbe3; stroke: #2a5590; text-anchor: middle; }
.i-num { font: bold 11px "DejaVu Serif", serif; fill: #2a5590; }
.i-pct { font: 25px "Noto Sans", sans-serif; fill: #444; }
.i-dec { font: bold 16px "Noto Sans", sans-serif; fill: #333; }
.i-sm { font: bold 11px "Noto Sans", sans-serif; fill: #222; }
.i-xs { font: bold 8px "DejaVu Sans", sans-serif; fill: #000; }
.i-fx { font: italic bold 21px "Liberation Serif", serif; fill: #9a6aa8; stroke: #5c3566; }
.i-bar { stroke: #404443; stroke-width: 3px; stroke-linecap: round; fill: none; }

/* document */
.main { flex: 1; min-height: 0; display: flex; }
.editor { flex: 1; min-width: 0; display: flex; flex-direction: column; }
.rulerbar { flex: none; height: 24px; display: flex; align-items: flex-start; }
.tabkind { flex: none; width: 7px; height: 6px; margin: 9px 71px 0 6px; border: solid #8f8e89; border-width: 0 0 2px 2px; }
.ruler { flex: 1; min-width: 0; height: 22px; }
.rnum { font: 9px "Noto Sans", sans-serif; fill: #999; text-anchor: middle; }
.workspace { flex: 1; min-height: 0; display: flex; padding-left: 84px; overflow: hidden; }
.page {
  flex: 1;
  min-width: 0;
  overflow: hidden;
  padding-top: 7px;
  background: #fff;
  box-shadow: 0 0 6px #999;
  color: #000;
  font: 23px/27px "Liberation Serif", serif;
}
.page p { margin: 0; text-align: center; }
.stages { width: 1148px; margin-left: 180px; table-layout: fixed; border-collapse: separate; border-spacing: 0; text-align: center; }
.c1 { width: 108px; }
.c2 { width: 131px; }
.c3 { width: 196px; }
.c4 { width: 181px; }
.c5 { width: 303px; }
.c6 { width: 229px; }
.stages th, .stages td { padding: 0; vertical-align: top; border: solid #000; border-width: 1px 0 0 1px; white-space: nowrap; }
.stages th { padding-bottom: 6px; }
.stages td { box-shadow: 0 -1px 0 #000; }
.stages .first td { box-shadow: none; }
.marked { position: relative; }
.ring { position: absolute; left: 1px; top: 1px; }
.typo { text-decoration: underline wavy #e00000 1px; text-underline-offset: 2px; text-decoration-skip-ink: none; }

.gutter { flex: none; width: 94px; display: flex; justify-content: space-between; padding-left: 3px; }
.stubs { width: 19px; padding-top: 115px; display: flex; flex-direction: column; }
.stubs i { flex: none; border-top: 1px solid #000; box-shadow: 0 -1px 0 #000; }
.stubs .thin { box-shadow: none; }
.h61 { height: 61px; }
.h82 { height: 82px; }
.h136 { height: 136px; }
.scroll { width: 7px; height: 51px; margin-top: 436px; background: #f28f6a; }

/* sidebar */
.splitter {
  flex: none;
  width: 7px;
  margin-bottom: 2px;
  display: flex;
  align-items: center;
  border: 1px solid #aeaca8;
  background: #f6f5f4;
}
.handle { width: 5px; height: 73px; background: #8f8f87; box-shadow: 0 0 0 1px #8f8f87; }
.handle::after { content: ""; display: block; width: 0; border: 4px solid transparent; border-left: 5px solid #fff; border-right: 0; }
.sidebar {
  flex: none;
  width: 40px;
  margin-bottom: 2px;
  display: flex;
  flex-direction: column;
  align-items: center;
  gap: 3px;
  padding-top: 3px;
  border: solid #aeaca8;
  border-width: 1px 0;
}
.side { flex: none; width: 32px; height: 32px; display: flex; align-items: center; justify-content: center; }
.side svg { width: 24px; height: 24px; }
.side.active { border: 1px solid #bab8b4; border-radius: 4px; }
.rule { width: 22px; height: 1px; background: #d8d6d3; }

/* status */
.statusbar {
  flex: none;
  height: 22px;
  display: flex;
  align-items: center;
  border-top: 1px solid #b2b0ac;
  font-size: 12px;
}
.statusbar > span { flex: none; height: 16px; line-height: 16px; padding-left: 8px; border-left: 1px solid #9b9a96; white-space: nowrap; }
.statusbar > .s-page { width: 198px; border: 0; }
.s-words { width: 318px; }
.s-style { width: 202px; }
.statusbar > .s-lang { width: 201px; padding: 0; text-align: center; }
.s-blank { width: 68px; }
.s-ico { width: 29px; }
.statusbar > .s-ico { display: flex; align-items: center; }
.statusbar > .s-cell { flex: 1; min-width: 80px; padding: 0; text-align: center; }
.statusbar > .s-views { width: 76px; display: flex; align-items: center; gap: 4px; padding-left: 11px; }
.s-views svg { display: block; }
.statusbar > .s-zoom { width: 143px; display: flex; align-items: center; gap: 5px; padding-left: 9px; }
.s-zoom button { font-size: 16px; line-height: 16px; font-weight: bold; color: #888; }
.s-zoom input {
  flex: none;
  width: 97px;
  height: 11px;
  appearance: none;
  background:
    linear-gradient(#aaa, #aaa) 25px 0 / 1px 100% no-repeat,
    linear-gradient(#aaa, #aaa) 49px 0 / 1px 100% no-repeat,
    linear-gradient(#aaa, #aaa) 0 5px / 100% 2px no-repeat;
}
.s-zoom input::-webkit-slider-thumb { appearance: none; width: 8px; height: 8px; border: 1px solid #777; border-radius: 4px; background: #fff; }
.statusbar > .s-pct { width: 49px; }
```
